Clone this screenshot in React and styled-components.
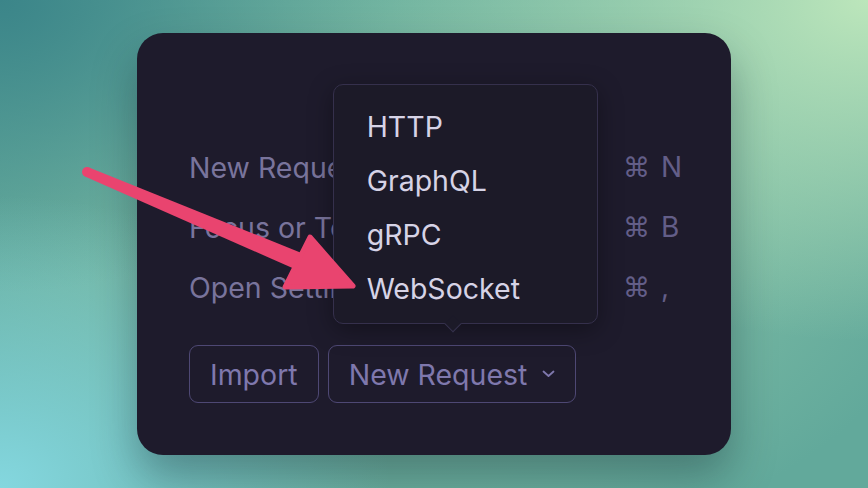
import React from 'react'
import styled, { createGlobalStyle } from 'styled-components'

const GlobalStyle = createGlobalStyle`
  html, body {
    margin: 0;
    padding: 0;
  }
  body {
    font-family: Inter, "Noto Sans", sans-serif;
  }
`

const Page = styled.div`
  width: 868px;
  height: 488px;
  position: relative;
  overflow: hidden;
  display: flex;
  align-items: center;
  justify-content: center;
  background:
    radial-gradient(ellipse 45% 60% at 0% 100%, #84d7df 0%, rgba(132, 215, 223, 0) 100%),
    radial-gradient(ellipse 55% 70% at 100% 0%, #bce6bb 0%, rgba(188, 230, 187, 0) 100%),
    radial-gradient(ellipse 45% 60% at 0% 0%, #3b8589 0%, rgba(59, 133, 137, 0) 100%),
    radial-gradient(ellipse 60% 70% at 50% 45%, #8fc9ab 0%, #62a99b 100%);
`

const Card = styled.div`
  width: 594px;
  height: 422px;
  box-sizing: border-box;
  padding: 104px 50px 52px 52px;
  border-radius: 26px;
  background: #1e1b2c;
  box-shadow: 0 22px 44px rgba(10, 30, 40, 0.35);
  display: flex;
  flex-direction: column;
`

const Shortcuts = styled.div`
  display: grid;
  grid-template-columns: 1fr auto;
  grid-auto-rows: 60px;
  align-items: center;
`

const Label = styled.span`
  font-size: 28.5px;
  color: #79749c;
  white-space: nowrap;
`

const Kbd = styled.span`
  display: flex;
  align-items: center;
  gap: 11px;
  font-size: 28px;
  color: #635e88;
`

const Cmd = styled.span`
  font-family: "DejaVu Sans", sans-serif;
  font-size: 27px;
  line-height: 1;
`

const Key = styled.span`
  width: 20px;
`

const Actions = styled.div`
  display: flex;
  gap: 9px;
  margin-top: 28px;
`

const Button = styled.button`
  position: relative;
  height: 58px;
  padding: 0 20px;
  display: flex;
  align-items: center;
  gap: 15px;
  border: 1.5px solid #4e4874;
  border-radius: 9px;
  background: transparent;
  color: #7f78ad;
  font-family: Inter, sans-serif;
  font-size: 28.5px;
`

const Menu = styled.div`
  position: absolute;
  left: 4px;
  bottom: 78px;
  width: 265px;
  height: 240px;
  box-sizing: border-box;
  padding: 14px 0 10px;
  background: #1c1a28;
  border: 1.5px solid #35304c;
  border-radius: 10px;
  box-shadow: 0 6px 24px rgba(0, 0, 0, 0.35);
  text-align: left;
  z-index: 2;

  &::after {
    content: '';
    position: absolute;
    left: 113px;
    bottom: -7px;
    width: 11px;
    height: 11px;
    background: #1c1a28;
    border-right: 1.5px solid #35304c;
    border-bottom: 1.5px solid #35304c;
    transform: rotate(45deg);
  }
`

const MenuItem = styled.div`
  height: 54px;
  display: flex;
  align-items: center;
  padding-left: 33px;
  font-size: 28.5px;
  color: #d6d3e6;
`

const Arrow = styled.svg`
  position: absolute;
  left: 0;
  top: 0;
  pointer-events: none;
  z-index: 5;
`

const Chevron = () => (
  <svg width="13" height="8" viewBox="0 0 13 8" fill="none">
    <path d="M1.5 1.5 L6.5 6 L11.5 1.5" stroke="#7f78ad" strokeWidth="1.8" strokeLinecap="round" strokeLinejoin="round" />
  </svg>
)

const rows = [
  { label: 'New Request', key: 'N' },
  { label: 'Focus or Toggle Sidebar', key: 'B' },
  { label: 'Open Settings', key: ',' },
]

const App = () => {
  return (
    <>
      <GlobalStyle />
      <Page>
        <Card>
          <Shortcuts>
            {rows.map(r => (
              <React.Fragment key={r.label}>
                <Label>{r.label}</Label>
                <Kbd>
                  <Cmd>⌘</Cmd>
                  <Key>{r.key}</Key>
                </Kbd>
              </React.Fragment>
            ))}
          </Shortcuts>
          <Actions>
            <Button>Import</Button>
            <Button>
              New Request
              <Chevron />
              <Menu>
                <MenuItem>HTTP</MenuItem>
                <MenuItem>GraphQL</MenuItem>
                <MenuItem>gRPC</MenuItem>
                <MenuItem>WebSocket</MenuItem>
              </Menu>
            </Button>
          </Actions>
        </Card>
        <Arrow width="868" height="488" viewBox="0 0 868 488">
          <circle cx="87" cy="172" r="5" fill="#e9446f" />
          <polygon points="85,176.6 89,167.4 304,254 297,270" fill="#e9446f" />
          <polygon
            points="310,237 353,286 285,287"
            fill="#e9446f"
            stroke="#e9446f"
            strokeWidth="5"
            strokeLinejoin="round"
          />
        </Arrow>
      </Page>
    </>
  )
}

export default App
